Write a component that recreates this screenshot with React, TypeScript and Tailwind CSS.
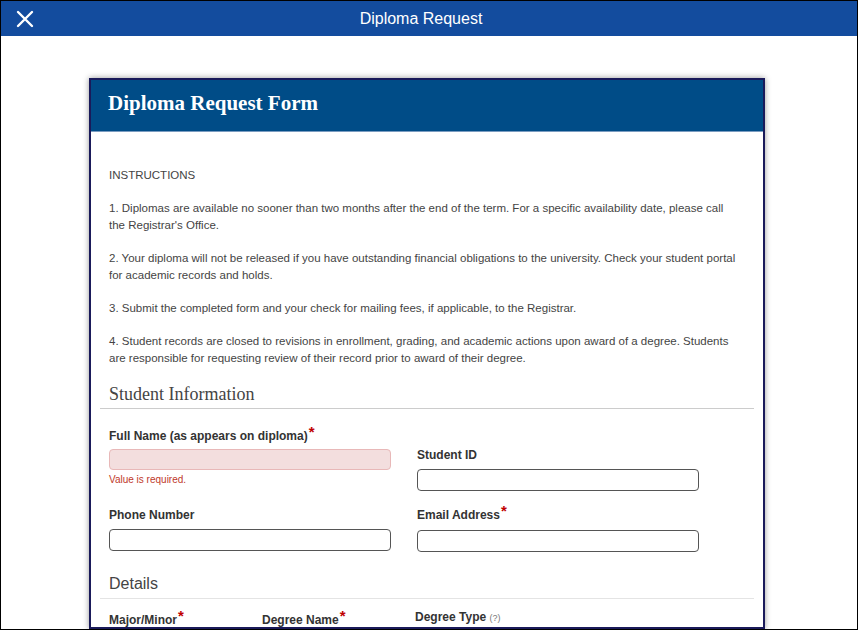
import React from "react";

const Star = () => <span className="text-[#c00000] text-[15px] leading-none relative -top-[3px] ml-[1px]">*</span>;

const Label = ({ children, req }: { children: React.ReactNode; req?: boolean }) => (
	<div className="text-[12px] font-bold text-[#333] leading-[14px]">
		{children}
		{req && <Star />}
	</div>
);

export default function App() {
	return (
		<div className="w-[858px] h-[630px] overflow-hidden border border-black bg-white flex flex-col" style={{ fontFamily: "Helvetica, 'Liberation Sans', Arial, sans-serif" }}>
			<div className="h-[35px] shrink-0 bg-[#134c9e] flex items-center relative">
				<svg className="absolute left-[15px] top-[9px]" width="18" height="18" viewBox="0 0 18 18">
					<path d="M2 2L16 16M16 2L2 16" stroke="white" strokeWidth="2.4" strokeLinecap="round" />
				</svg>
				<div className="flex-1 text-center text-white text-[16px] -ml-[16px]">Diploma Request</div>
			</div>
			<div className="pt-[42px] pl-[88px]">
				<div className="w-[676px] border-2 border-[#1a1a5a] shadow-[0_0_6px_rgba(0,0,0,0.4)] bg-white">
					<div className="h-[52px] bg-[#004c87] flex items-center pl-[17px] pb-[4px] border-b border-[#7a9cc0]">
						<span className="text-white text-[21px] font-bold" style={{ fontFamily: "'Liberation Serif', serif" }}>Diploma Request Form</span>
					</div>
					<div className="px-[9px] text-[#444] text-[11.5px] leading-[17px]">
						<div className="pl-[9px] pr-[14px] pt-[35px]">
							<p>INSTRUCTIONS</p>
							<p className="mt-[16px]">1. Diplomas are available no sooner than two months after the end of the term. For a specific availability date, please call the Registrar's Office.</p>
							<p className="mt-[16px]">2. Your diploma will not be released if you have outstanding financial obligations to the university. Check your student portal for academic records and holds.</p>
							<p className="mt-[16px]">3. Submit the completed form and your check for mailing fees, if applicable, to the Registrar.</p>
							<p className="mt-[16px]">4. Student records are closed to revisions in enrollment, grading, and academic actions upon award of a degree. Students are responsible for requesting review of their record prior to award of their degree.</p>
						</div>
						<div className="mt-[15px] border-b border-[#ccc] px-[9px] pb-[2px] text-[18px] text-[#444] leading-[24px]" style={{ fontFamily: "'Liberation Serif', serif" }}>Student Information</div>
						<div className="px-[9px] pt-[18px] grid grid-cols-[282px_282px] gap-x-[26px]">
							<div>
								<Label req>Full Name (as appears on diploma)</Label>
								<div className="mt-[6px] h-[21px] rounded-[4px] border border-[#e8b8b8] bg-[#f3dede]" />
								<div className="mt-[3px] text-[10px] text-[#c0392b] leading-[14px]">Value is required.</div>
							</div>
							<div className="pt-[21px]">
								<Label>Student ID</Label>
								<div className="mt-[7px] h-[22px] rounded-[4px] border border-[#555]" />
							</div>
							<div className="mt-[17px]">
								<Label>Phone Number</Label>
								<div className="mt-[7px] h-[22px] rounded-[4px] border border-[#555]" />
							</div>
							<div className="mt-[15px]">
								<Label req>Email Address</Label>
								<div className="mt-[8px] h-[22px] rounded-[4px] border border-[#555]" />
							</div>
						</div>
						<div className="mt-[21px] border-b border-[#e4e4e4] px-[9px] pb-[3px] text-[16px] text-[#444] leading-[22px]">Details</div>
						<div className="px-[9px] pt-[12px] flex">
							<div className="w-[153px]"><Label req>Major/Minor</Label></div>
							<div className="w-[153px]"><Label req>Degree Name</Label></div>
							<div className="text-[12px] font-bold text-[#333] -mt-[2px]">Degree Type <span className="font-normal text-[9px] text-[#777]">(?)</span></div>
						</div>
					</div>
				</div>
			</div>
		</div>
	);
}
